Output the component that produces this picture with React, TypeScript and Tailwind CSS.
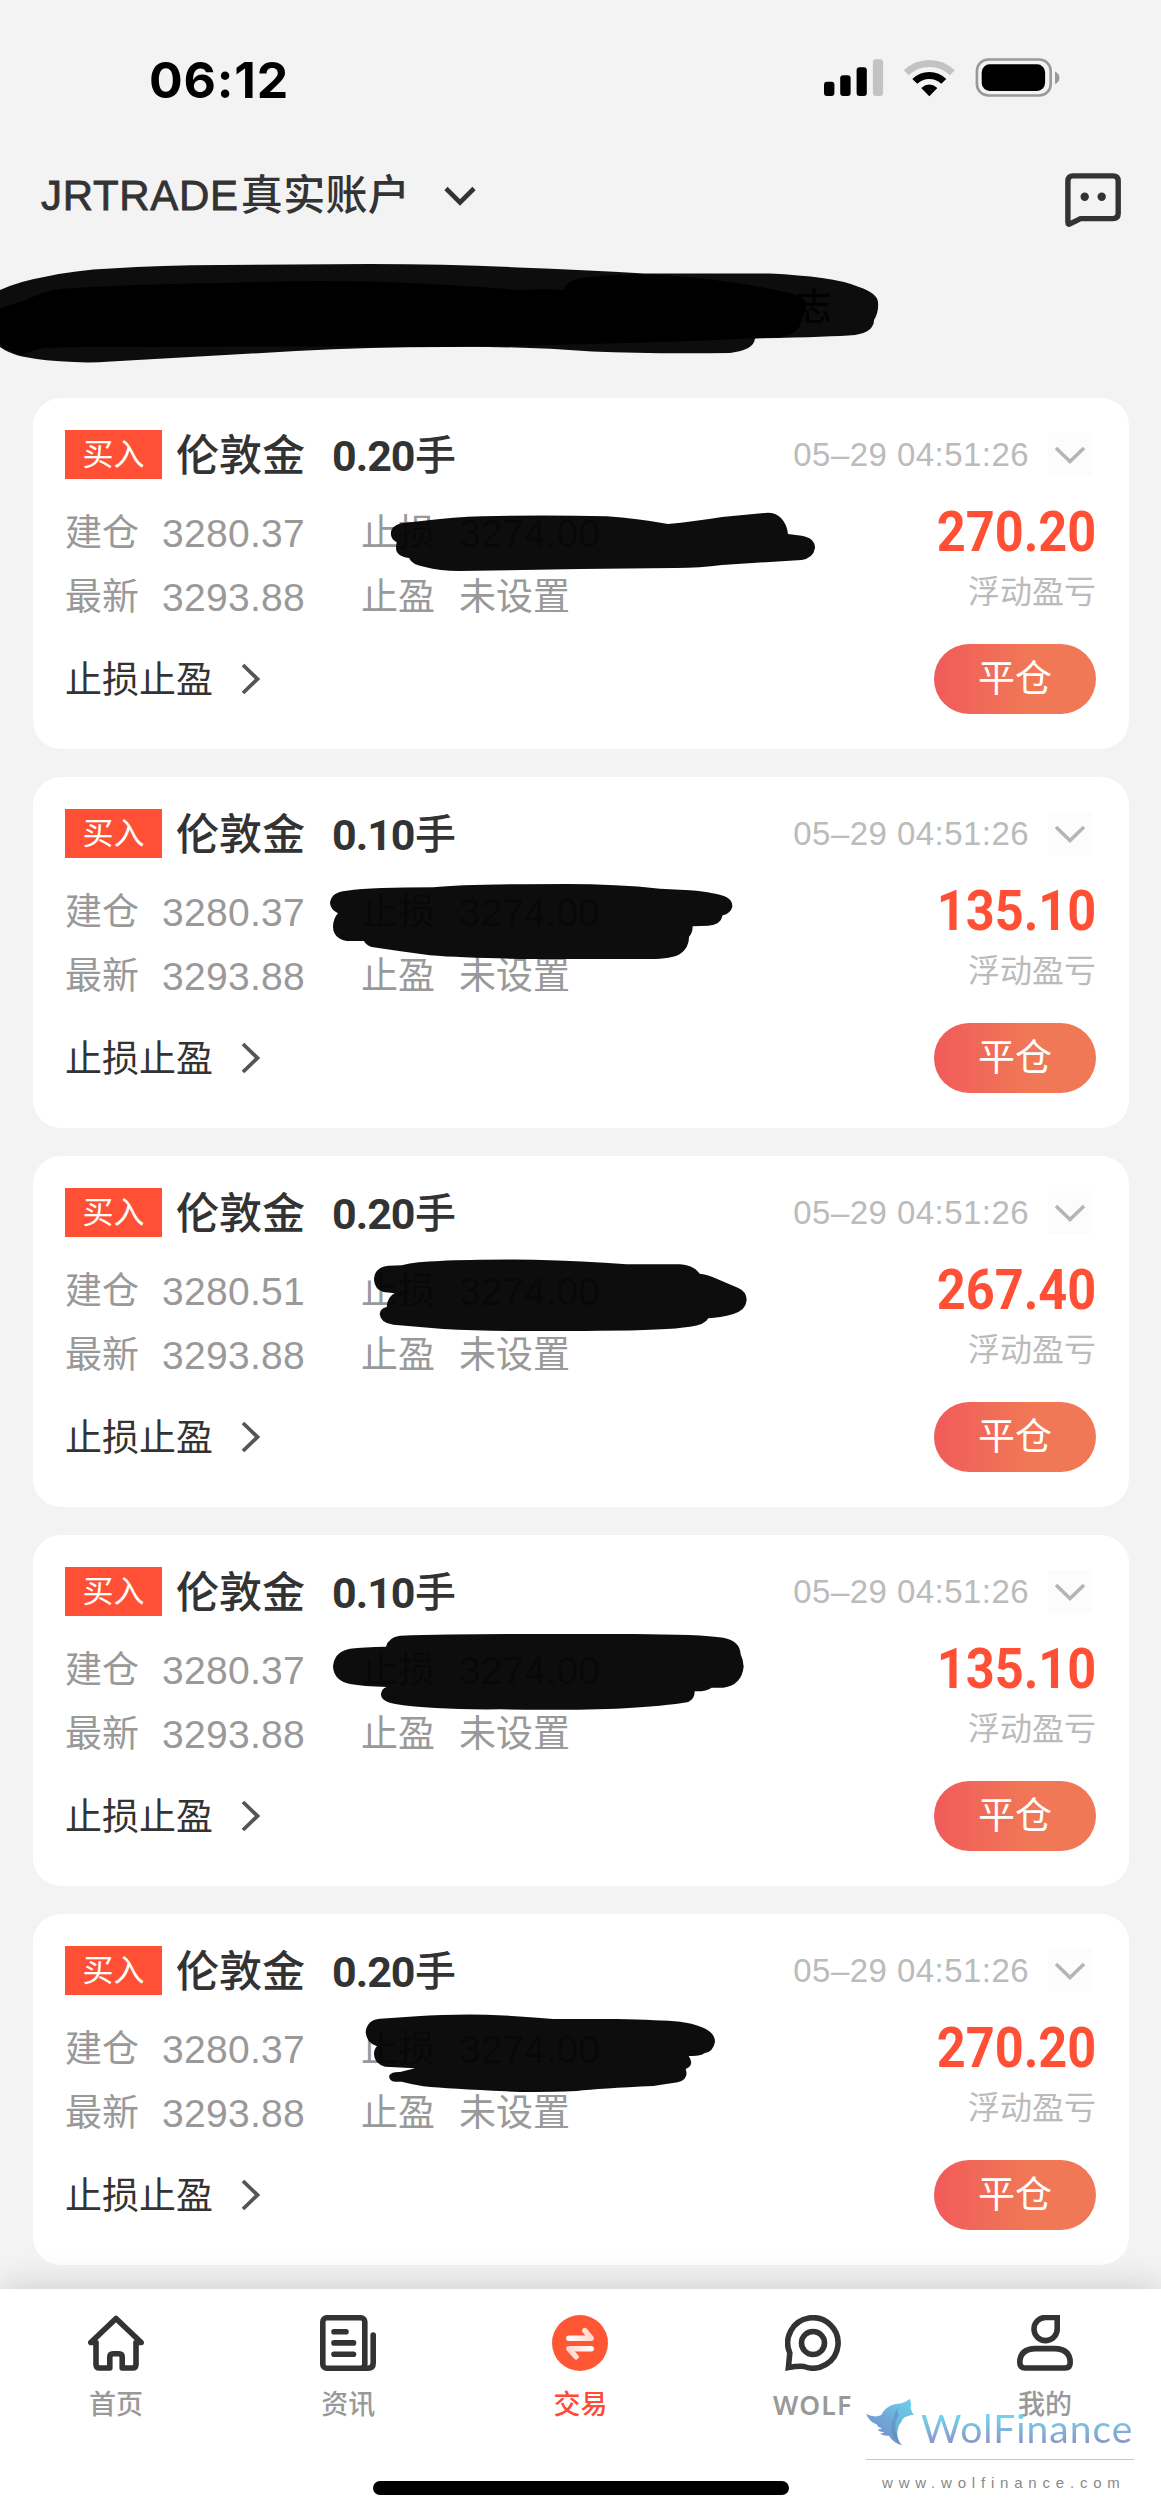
import React from 'react';

interface Position {
  id: number;
  lots: string;
  openPrice: string;
  profit: string;
  scribble: string;
  shift: number;
}

const positions: Position[] = [
  {
    id: 1,
    lots: '0.20',
    openPrice: '3280.37',
    profit: '270.20',
    shift: 0,
    scribble:
      'M273 186Q271 168 284 160Q295 150 330 148L420 138Q500 129 592 129Q750 126 921 130Q1010 136 1104 153Q1180 146 1266 132L1395 120Q1425 117 1443 135Q1462 155 1464 183L1505 188Q1545 195 1545 225Q1540 255 1505 261L1266 276Q1200 285 1128 285L840 288L477 294Q420 294 375 282Q335 275 327 255Q288 250 288 225Q288 215 290 208Q275 200 273 186Z',
  },
  {
    id: 2,
    lots: '0.10',
    openPrice: '3280.37',
    profit: '135.10',
    shift: 24,
    scribble:
      'M90 130Q92 96 140 92Q220 82 400 82Q500 72 800 72Q950 72 1080 86L1170 91Q1250 98 1280 112Q1298 122 1297 140Q1292 160 1268 166Q1262 196 1225 197L1178 199Q1178 220 1167 230Q1168 262 1140 282Q1115 297 1050 297H700Q500 295 390 286Q300 274 215 261Q198 255 192 243H140Q100 235 99 200Q100 175 114 160Q92 150 90 130Z',
  },
  {
    id: 3,
    lots: '0.20',
    openPrice: '3280.51',
    profit: '267.40',
    shift: -3,
    scribble:
      'M222 150Q222 112 265 107L305 106Q350 94 420 93Q520 88 700 89Q850 92 980 103H1140Q1180 105 1199 131Q1220 132 1250 146L1315 174Q1340 185 1340 210Q1338 240 1300 252Q1260 263 1225 265Q1215 285 1170 290Q1100 301 900 302Q600 306 430 297L280 284Q242 280 239 252Q240 235 260 231Q262 200 284 190L250 186Q224 178 222 150Z',
  },
  {
    id: 4,
    lots: '0.10',
    openPrice: '3280.37',
    profit: '135.10',
    shift: 0,
    scribble:
      'M99 170Q102 125 150 116Q190 111 258 110Q265 82 300 77Q450 72 700 72H1000Q1200 73 1270 83Q1320 92 1322 133Q1330 150 1331 170Q1325 225 1270 233H1235Q1220 245 1184 244Q1185 265 1165 276Q1100 288 950 296Q750 302 600 298Q400 300 290 283Q242 275 243 252Q245 235 260 231Q190 229 150 222Q102 212 99 170Z',
  },
  {
    id: 5,
    lots: '0.20',
    openPrice: '3280.37',
    profit: '270.20',
    shift: 3,
    scribble:
      'M197 127Q200 90 240 86L350 79Q440 72 560 74Q660 78 760 87H950Q1080 90 1140 95Q1245 110 1245 155Q1240 185 1213 190Q1200 200 1166 198Q1185 225 1157 237Q1168 268 1133 277Q1100 282 1060 288Q900 295 830 303Q700 308 620 304Q450 297 370 289Q340 284 305 275H285Q265 272 268 256Q275 245 300 246L345 235L255 230Q222 220 222 192Q222 178 231 169Q200 160 197 127Z',
  },
];

function StatusBar() {
  return (
    <div className="flex h-[157px] items-start justify-between pt-[50px] pl-[149px] pr-[101px]">
      <span className="font-['Inter',sans-serif] text-[50px] leading-[60px] font-bold tracking-[0.8px] text-black">06:12</span>
      <svg className="mt-2 h-10 w-[236px]" viewBox="0 0 236 40">
        <rect x="0" y="23.7" width="10.4" height="14.4" rx="3" />
        <rect x="16.2" y="17.3" width="10.4" height="20.8" rx="3" />
        <rect x="32.6" y="9.3" width="10.2" height="28.8" rx="3" />
        <rect x="48.9" y="1.3" width="10.2" height="36.8" rx="3" fill="#c3c3c3" />
        <path d="M82.3 14.8A33 33 0 0 1 128.3 14.8" fill="none" stroke="#c3c3c3" strokeWidth="7" />
        <path d="M90.8 23.4A20.5 20.5 0 0 1 119.8 23.4" fill="none" stroke="#000" strokeWidth="7" />
        <path d="M105.3 38.2L97.2 30Q105.3 23.2 113.4 30Z" />
        <rect x="152.9" y="1.5" width="73.8" height="36" rx="11.5" fill="none" stroke="#999" strokeWidth="2.6" />
        <rect x="157.7" y="6.3" width="63.4" height="26.6" rx="8" />
        <path d="M231 13.5Q235.4 15.5 235.4 19.8Q235.4 24.2 231 26.2Z" fill="#999" />
      </svg>
    </div>
  );
}

function AccountHeader() {
  return (
    <header className="flex h-[83px] items-start justify-between pl-[41px] pr-10">
      <div className="mt-[9px] flex items-center text-[42px] leading-[60px] font-medium text-[#333]">
        <span className="tracking-[0.7px] [-webkit-text-stroke:0.8px_#333]">JRTRADE</span>
        <span className="ml-0.5 tracking-[0.3px]">真实账户</span>
        <svg className="ml-[33px] h-[22px] w-[34px]" viewBox="0 0 34 22" fill="none" stroke="#333" strokeWidth="4.6">
          <path d="M3 3.5L17 17.5L31 3.5" />
        </svg>
      </div>
      <svg className="mt-4 h-[54px] w-14" viewBox="0 0 56 54" fill="none" stroke="#333" strokeWidth="5.4">
        <path d="M2.9 8Q2.9 2.9 8 2.9H48Q53.2 2.9 53.2 8V40.5Q53.2 45.6 48 45.6H15.5L5 50.9Q2.9 51.9 2.9 49.5Z" />
        <circle cx="19.7" cy="23.8" r="4.2" fill="#333" stroke="none" />
        <circle cx="36.7" cy="23.8" r="4.2" fill="#333" stroke="none" />
      </svg>
    </header>
  );
}

function TabStrip() {
  return (
    <div className="relative flex h-[158px] items-center pb-[22px] pl-[796px]">
      <span className="text-[36px] leading-[50px] font-medium text-[#333]">志</span>
      <svg className="absolute top-0 left-0 h-[158px] w-[900px]" viewBox="0 240 900 158" fillOpacity="0.95">
        <path d="M0 290Q20 281 44 277Q75 270 111 268.500Q160 265 222 265L370 264Q450 264 518 267.500Q585 270 644 273.500H770Q800 275 822 278Q845 281 859 287Q877 293 878 302Q879 312 874 320Q874 332 855 335Q830 337 755 338.500Q754 350 730 353Q650 354 592 351.500Q520 346 444 347Q370 347 296 351L111 361.500Q90 363 74 362Q45 361 22 356.500Q8 353 0 347Z" />
        <path d="M0 308Q20 303 37 295Q50 289 74 288Q140 284 222 283Q300 280 370 281.500Q450 284 518 290L545 289L563 290Q567 279 590 277Q615 274 644 274Q670 275 696 278Q745 283 785 292Q807 296 806 306Q806 313 801 318Q803 333 780 337Q690 342 592 344Q520 346 444 347Q290 346 148 347Q90 346 44 348Q32 350 22 355Q5 351 0 343Z" />
      </svg>
    </div>
  );
}

function PositionCard({ position }: { position: Position }) {
  return (
    <section className="relative h-[351px] rounded-[28px] bg-white pt-8 pr-[33px] pl-8">
      <div className="flex h-[49px] items-center">
        <span className="flex h-[49px] w-[97px] items-center justify-center bg-[#ff5035] text-[31px] leading-none text-white">
          买入
        </span>
        <span className="mt-[3px] ml-[14px] text-[43px] leading-[49px] font-medium text-[#333]">伦敦金</span>
        <span className="mt-[3px] ml-[27px] w-[83px] font-['Roboto',sans-serif] text-[43px] leading-[49px] font-bold tracking-[-1px] text-[#333]">
          {position.lots}
        </span>
        <span className="mt-[3px] text-[41px] leading-[49px] font-medium text-[#333]">手</span>
        <span className="ml-auto text-[33px] leading-[49px] tracking-[0.45px] whitespace-nowrap text-[#bbb]">05–29 04:51:26</span>
        <span className="mr-1 ml-[19px] flex h-[43px] w-11 items-center justify-center bg-[#fcfcfc]">
          <svg className="h-[18px] w-8" viewBox="0 0 32 18" fill="none" stroke="#b5b5b5" strokeWidth="3.6">
            <path d="M2 2L16 15.500L30 2" />
          </svg>
        </span>
      </div>

      <div className="mt-[22px] flex h-32 justify-between text-[37px] leading-[64px] text-[#999]">
        <div className="mt-px grid grid-cols-[97px_199px_98px_auto]">
          <span>建仓</span>
          <span className="text-[39px] tracking-[0.3px]">{position.openPrice}</span>
          <span>止损</span>
          <span className="text-[39px]">3274.00</span>
          <span>最新</span>
          <span className="text-[39px] tracking-[0.3px]">3293.88</span>
          <span>止盈</span>
          <span>未设置</span>
        </div>
        <div className="flex flex-col items-end">
          <span className="origin-right scale-x-[0.91] font-['Roboto',sans-serif] text-[55.5px] leading-[64px] font-bold text-[#ff5035]">
            {position.profit}
          </span>
          <span className="text-[32px] leading-[54px] text-[#bbb]">浮动盈亏</span>
        </div>
      </div>

      <div className="mt-[15px] flex h-[70px] items-center justify-between">
        <button type="button" className="flex items-center text-[37px] leading-[64px] text-[#333]">
          <span className="mt-[3px]">止损止盈</span>
          <svg className="ml-[28px] h-8 w-5" viewBox="0 0 20 32" fill="none" stroke="#555" strokeWidth="3.8">
            <path d="M2 2L16.500 16L2 30" />
          </svg>
        </button>
        <button
          type="button"
          className="h-[70px] w-[162px] rounded-full bg-linear-to-r from-[#f15a5a] to-[#f07856] to-60% pt-0.5 text-[37px] leading-[68px] text-white"
        >
          平仓
        </button>
      </div>

      <svg className="absolute top-[75px] left-[267px] h-[150px] w-[560px]" viewBox="0 0 1680 450" fillOpacity="0.95">
        <path d={position.scribble} transform={`translate(0 ${position.shift})`} />
      </svg>
    </section>
  );
}

function HomeIcon() {
  return (
    <svg className="h-14 w-14" viewBox="0 0 56 56" fill="none" stroke="#333" strokeWidth="5.6" strokeLinejoin="round">
      <path d="M28 3.500L2.800 27.500H8V49.500Q8 53 11.500 53H21.800V42Q21.800 38.800 25 38.800H31Q34.200 38.800 34.200 42V53H44.500Q48 53 48 49.500V27.500H53.200Z" />
    </svg>
  );
}

function NewsIcon() {
  return (
    <svg className="h-14 w-14" viewBox="0 0 56 56" fill="none" stroke="#333" strokeWidth="5.6" strokeLinecap="round">
      <rect x="2.8" y="2.8" width="42" height="50.400" rx="4" />
      <path d="M53.200 20V48Q53.200 53.200 48 53.200H42M14 16.700H26M14 27.900H33.500M14 39.200H33.500" />
    </svg>
  );
}

function TradeIcon() {
  return (
    <svg className="h-14 w-14" viewBox="0 0 56 56" fill="none" strokeWidth="5.4" strokeLinecap="round" strokeLinejoin="round">
      <defs>
        <linearGradient id="tradeTop" gradientUnits="userSpaceOnUse" x1="16" y1="0" x2="41" y2="0">
          <stop offset="0" stopColor="#fff" />
          <stop offset="1" stopColor="#ffd6cc" />
        </linearGradient>
        <linearGradient id="tradeBottom" gradientUnits="userSpaceOnUse" x1="16" y1="0" x2="41" y2="0">
          <stop offset="0" stopColor="#ffd6cc" />
          <stop offset="1" stopColor="#fff" />
        </linearGradient>
      </defs>
      <circle cx="28" cy="28" r="28" fill="#ff5634" />
      <path d="M16.800 23.200H39.200L32.800 15.600" stroke="url(#tradeTop)" />
      <path d="M39.200 33.800H16.800L24 41.800" stroke="url(#tradeBottom)" />
    </svg>
  );
}

function WolfIcon() {
  return (
    <svg className="h-14 w-14" viewBox="0 0 56 56" fill="none" stroke="#333" strokeWidth="5.6">
      <path d="M3.400 52.600L4.800 38A25.200 25.200 0 1 1 19 51.500Q14.500 50.500 3.400 52.600Z" />
      <circle cx="28" cy="28" r="11.500" />
    </svg>
  );
}

function ProfileIcon() {
  return (
    <svg className="h-14 w-14" viewBox="0 0 56 56" fill="none" stroke="#333" strokeWidth="5.6">
      <path d="M28.500 2.400H40.200V13.500A11.600 11.600 0 1 1 28.500 2.400Z" />
      <path d="M18.500 33.600H37.500Q53.200 34 53.200 47.500Q53.200 53 48 53H8Q2.800 53 2.800 47.500Q2.800 34 18.500 33.600Z" />
    </svg>
  );
}

const tabs = [
  { label: '首页', Icon: HomeIcon, active: false },
  { label: '资讯', Icon: NewsIcon, active: false },
  { label: '交易', Icon: TradeIcon, active: true },
  { label: 'WOLF', Icon: WolfIcon, active: false },
  { label: '我的', Icon: ProfileIcon, active: false },
];

function BrandMark() {
  return (
    <div className="absolute top-[108px] right-[27px] w-[268px]">
      <div className="flex h-[62px] items-start">
        <svg className="mt-[2px] h-[47px] w-12 shrink-0" viewBox="0 0 144 141">
          <defs>
            <linearGradient id="wolfBody" x1="1" y1="0" x2="0.4" y2="1">
              <stop offset="0" stopColor="#6fd6f2" />
              <stop offset="0.55" stopColor="#6fa8d8" />
              <stop offset="1" stopColor="#7590c8" />
            </linearGradient>
          </defs>
          <path
            d="M0 45Q28 58 46 48Q60 16 107 13Q118 10 132 0Q136 14 134 28Q136 40 143 47Q133 47 127 51Q112 52 106 68Q92 84 94 110Q96 126 108 139Q80 130 69 110Q55 112 42 104Q50 104 55 99Q43 101 34 92Q44 92 48 88Q36 86 32 76Q12 70 0 45Z"
            fill="url(#wolfBody)"
          />
          <path d="M107 13Q118 10 132 0Q136 14 134 28Q136 40 143 47Q133 47 127 51Q112 52 106 68Q92 84 94 110Q84 78 98 50Q88 34 107 13Z" fill="#69c6e2" fillOpacity="0.55" />
          <path d="M94 110Q76 82 98 48Q92 40 98 24Q82 44 84 58Q68 84 84 118Q94 132 108 139Q96 126 94 110Z" fill="#4f83b5" fillOpacity="0.4" />
        </svg>
        <span className="mt-[3px] ml-[7px] bg-linear-to-b from-[#68d8f3] from-25% to-[#8a92c4] to-80% bg-clip-text font-['Lato',sans-serif] text-[39px] leading-[56px] tracking-[1px] text-transparent">
          WolFinance
        </span>
      </div>
      <div className="h-px w-full bg-[#c8c8c8]" />
      <p className="mt-[13px] pl-4 text-[15px] leading-5 tracking-[5.8px] whitespace-nowrap text-[#888]">www.wolfinance.com</p>
    </div>
  );
}

function BottomNav() {
  return (
    <nav className="relative h-[227px] bg-white pt-[26px] shadow-[0_-4px_32px_rgba(0,0,0,0.14)]">
      <div className="grid grid-cols-5">
        {tabs.map(({ label, Icon, active }) => (
          <div key={label} className="flex flex-col items-center">
            <Icon />
            <span
              className={
                active
                  ? 'mt-[14px] text-[27px] leading-10 font-medium text-[#ff4a36]'
                  : 'mt-[14px] text-[27px] leading-10 font-medium text-[#999]'
              }
            >
              {label === 'WOLF' ? (
                <span className="font-['Noto_Sans',sans-serif] text-[26.5px] font-semibold tracking-[1.2px]">WOLF</span>
              ) : (
                label
              )}
            </span>
          </div>
        ))}
      </div>
      <div className="mx-auto mt-[55px] h-[14px] w-[416px] rounded-full bg-black" />
      <BrandMark />
    </nav>
  );
}

export default function App() {
  return (
    <main className="h-[2516px] w-[1161px] overflow-hidden bg-[#f3f3f3] font-['Liberation_Sans','Noto_Sans_CJK_SC',sans-serif]">
      <StatusBar />
      <AccountHeader />
      <TabStrip />
      <div className="flex flex-col gap-7 pr-8 pb-6 pl-[33px]">
        {positions.map((position) => (
          <PositionCard key={position.id} position={position} />
        ))}
      </div>
      <BottomNav />
    </main>
  );
}
